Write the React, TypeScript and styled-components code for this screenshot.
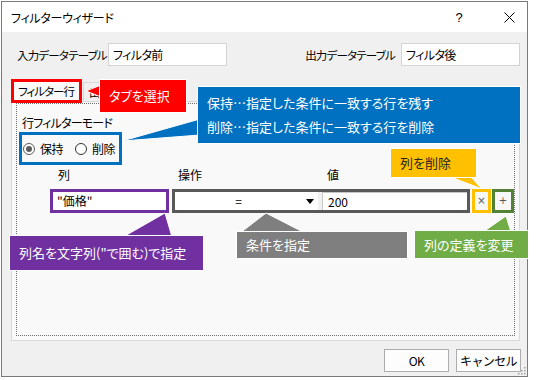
import styled, { createGlobalStyle } from "styled-components";

const GlobalStyle = createGlobalStyle`
  html, body {
    margin: 0;
    padding: 0;
    background: #ffffff;
  }
  body {
    font-family: "Noto Sans CJK JP", "Noto Sans", sans-serif;
    font-feature-settings: "palt" 1;
    color: #000;
  }
`;

type CalloutSpec = {
  x: number;
  y: number;
  w: number;
  h: number;
  bg: string;
  color: string;
  tail: string;
  lines: string[];
};

// 吹き出し（ページ座標で指定）
const callouts: CalloutSpec[] = [
  { x: 100, y: 80, w: 86, h: 32, bg: "#ff0000", color: "#fff", tail: "101,85 86,91 101,97", lines: ["タブを選択"] },
  {
    x: 198, y: 87, w: 322, h: 56, bg: "#0070c0", color: "#fff", tail: "200,119 122,141 200,135",
    lines: ["保持…指定した条件に一致する行を残す", "削除…指定した条件に一致する行を削除"],
  },
  { x: 391, y: 149, w: 85, h: 28, bg: "#ffc000", color: "#262626", tail: "448,176 482,189 470,176", lines: ["列を削除"] },
  { x: 10, y: 236, w: 193, h: 34, bg: "#7030a0", color: "#fff", tail: "123,237 165,213 172,237", lines: ['列名を文字列("で囲む)で指定'] },
  { x: 237, y: 232, w: 170, h: 26, bg: "#7f7f7f", color: "#fff", tail: "240,233 266,213 305,233", lines: ["条件を指定"] },
  { x: 415, y: 231, w: 113, h: 27, bg: "#70ad47", color: "#fff", tail: "483,232 506,216 511,232", lines: ["列の定義を変更"] },
];

function App() {
  return (
    <>
      <GlobalStyle />
      <Window>
        <TitleBar>
          <TitleText>フィルターウィザード</TitleText>
          <HelpButton>?</HelpButton>
          <CloseButton>
            <svg width="11" height="11" viewBox="0 0 11 11">
              <path d="M0.5 0.5 L10.5 10.5 M10.5 0.5 L0.5 10.5" stroke="#000" strokeWidth="1" />
            </svg>
          </CloseButton>
        </TitleBar>
        <Body>
          <TableRow>
            <Field>
              <FieldLabel $width={85}>入力データテーブル</FieldLabel>
              <TextBox>フィルタ前</TextBox>
            </Field>
            <Field>
              <FieldLabel>出力データテーブル</FieldLabel>
              <TextBox>フィルタ後</TextBox>
            </Field>
          </TableRow>

          <TabStrip>
            <TabMark>
              <Tab $active>フィルター行</Tab>
            </TabMark>
            <Tab>出力列</Tab>
          </TabStrip>

          <TabPanel>
            <FocusRect>
              <ModeLabel>行フィルターモード</ModeLabel>
              <RadioBox>
                <Radio>
                  <RadioCircle $checked />
                  保持
                </Radio>
                <Radio>
                  <RadioCircle />
                  削除
                </Radio>
              </RadioBox>

              <ColumnHeaders>
                <HeaderCell $width={122} $indent={8}>列</HeaderCell>
                <HeaderCell $width={150} $indent={6}>操作</HeaderCell>
                <HeaderCell $indent={5}>値</HeaderCell>
              </ColumnHeaders>

              <ConditionRow>
                <Mark $color="#7030a0" $width={119}>
                  <CellInput>"価格"</CellInput>
                </Mark>
                <Mark $color="#595959" $width={298} $gap={3}>
                  <OpSelect>
                    <OpValue>=</OpValue>
                    <OpArrow>
                      <svg width="8" height="5" viewBox="0 0 8 5">
                        <path d="M0 0 H8 L4 5 Z" fill="#000" />
                      </svg>
                    </OpArrow>
                  </OpSelect>
                  <ValueInput>200</ValueInput>
                </Mark>
                <Mark $color="#ffc000" $width={19} $gap={2}>
                  <SmallButton>×</SmallButton>
                </Mark>
                <Mark $color="#538135" $width={22} $gap={1}>
                  <SmallButton>+</SmallButton>
                </Mark>
              </ConditionRow>
            </FocusRect>
          </TabPanel>

          <Footer>
            <DialogButton>OK</DialogButton>
            <DialogButton>キャンセル</DialogButton>
          </Footer>
        </Body>

        <TailLayer width="526" height="376">
          <g transform="translate(-2,-2)">
            {callouts.map((c) => (
              <polygon key={c.tail} points={c.tail} fill={c.bg} stroke="#fff" strokeWidth="1" />
            ))}
          </g>
        </TailLayer>
        {callouts.map((c) => (
          <Callout key={c.lines[0]} $x={c.x} $y={c.y} $w={c.w} $h={c.h} $bg={c.bg} $color={c.color}>
            {c.lines.map((l) => (
              <CalloutLine key={l}>{l}</CalloutLine>
            ))}
          </Callout>
        ))}

        <Grip width="9" height="9" viewBox="0 0 9 9">
          <rect x="7" y="1" width="1.5" height="1.5" fill="#a0a0a0" />
          <rect x="4" y="4" width="1.5" height="1.5" fill="#a0a0a0" />
          <rect x="7" y="4" width="1.5" height="1.5" fill="#a0a0a0" />
          <rect x="1" y="7" width="1.5" height="1.5" fill="#a0a0a0" />
          <rect x="4" y="7" width="1.5" height="1.5" fill="#a0a0a0" />
          <rect x="7" y="7" width="1.5" height="1.5" fill="#a0a0a0" />
        </Grip>
      </Window>
    </>
  );
}

const Window = styled.div`
  position: relative;
  margin: 1px 0 0 1px;
  width: 527px;
  height: 376px;
  box-sizing: border-box;
  border: 1px solid #7a7a7a;
  background: #f0f0f0;
  display: flex;
  flex-direction: column;
  font-size: 12px;
`;

const TitleBar = styled.div`
  height: 30px;
  background: #ffffff;
  display: flex;
  align-items: center;
`;

const TitleText = styled.span`
  flex: 1;
  padding-left: 9px;
  font-size: 12px;
  letter-spacing: -0.3px;
`;

const HelpButton = styled.span`
  width: 16px;
  text-align: center;
  font-family: "Liberation Sans", sans-serif;
  font-size: 13px;
  margin-right: 24px;
`;

const CloseButton = styled.span`
  width: 36px;
  height: 30px;
  display: flex;
  align-items: center;
  justify-content: center;
`;

const Body = styled.div`
  flex: 1;
  display: flex;
  flex-direction: column;
  padding: 11px 7px 3px 9px;
`;

const TableRow = styled.div`
  height: 23px;
  display: flex;
  justify-content: space-between;
  padding-left: 6px;
`;

const Field = styled.div`
  display: flex;
  align-items: center;
  gap: 6px;
`;

const FieldLabel = styled.span<{ $width?: number }>`
  width: ${(p) => (p.$width ? `${p.$width}px` : "auto")};
  white-space: nowrap;
  font-size: 11.5px;
  letter-spacing: -0.8px;
`;

const TextBox = styled.div`
  width: 119px;
  height: 23px;
  box-sizing: border-box;
  border: 1px solid #d4d4d4;
  background: #ffffff;
  padding-left: 4px;
  line-height: 21px;
  letter-spacing: -0.6px;
`;

const TabStrip = styled.div`
  margin-top: 13px;
  display: flex;
  align-items: flex-end;
  height: 22px;
  position: relative;
  z-index: 1;
`;

const TabMark = styled.div`
  border: 3px solid #ff0000;
  margin-bottom: -2px;
  margin-right: 1px;
  display: flex;
`;

const Tab = styled.div<{ $active?: boolean }>`
  height: ${(p) => (p.$active ? 18 : 19)}px;
  width: ${(p) => (p.$active ? "65px" : "48px")};
  padding-left: ${(p) => (p.$active ? 4 : 5)}px;
  box-sizing: border-box;
  white-space: nowrap;
  background: ${(p) => (p.$active ? "#f9f9f9" : "#f0f0f0")};
  border: ${(p) => (p.$active ? "none" : "1px solid #d9d9d9")};
  border-bottom: none;
  font-size: 11.5px;
  line-height: 18px;
  letter-spacing: -1px;
`;

const TabPanel = styled.div`
  height: 240px;
  box-sizing: border-box;
  border: 1px solid #d9d9d9;
  background: #f9f9f9;
  padding: 1px 4px 4px 4px;
  display: flex;
`;

const FocusRect = styled.div`
  flex: 1;
  border: 1px dotted #6e6e6e;
  display: flex;
  flex-direction: column;
`;

const ModeLabel = styled.div`
  margin: 11px 0 0 5px;
  line-height: 16px;
  letter-spacing: -0.8px;
`;

const RadioBox = styled.div`
  margin: 1px 0 0 2px;
  width: 103px;
  height: 33px;
  box-sizing: border-box;
  border: 3px solid #0070c0;
  display: flex;
  align-items: center;
  padding-left: 1px;
`;

const Radio = styled.label`
  display: flex;
  align-items: center;
  flex-shrink: 0;
  white-space: nowrap;
  gap: 5px;
  margin-right: 12px;
  letter-spacing: -0.5px;
`;

const RadioCircle = styled.span<{ $checked?: boolean }>`
  width: 12px;
  height: 12px;
  flex-shrink: 0;
  box-sizing: border-box;
  border-radius: 50%;
  border: 1px solid ${(p) => (p.$checked ? "#5c5c5c" : "#333")};
  background: #ffffff;
  display: flex;
  align-items: center;
  justify-content: center;

  &::after {
    content: "";
    width: 6px;
    height: 6px;
    border-radius: 50%;
    background: ${(p) => (p.$checked ? "#5c5c5c" : "transparent")};
  }
`;

const ColumnHeaders = styled.div`
  margin-top: 2px;
  padding-left: 33px;
  display: flex;
  line-height: 16px;
`;

const HeaderCell = styled.span<{ $width?: number; $indent: number }>`
  width: ${(p) => (p.$width ? `${p.$width}px` : "auto")};
  padding-left: ${(p) => p.$indent}px;
  box-sizing: border-box;
`;

const ConditionRow = styled.div`
  margin-top: 6px;
  padding-left: 33px;
  display: flex;
  align-items: center;
`;

const Mark = styled.div<{ $color: string; $width: number; $gap?: number }>`
  width: ${(p) => p.$width}px;
  height: 24px;
  box-sizing: border-box;
  border: 3px solid ${(p) => p.$color};
  margin-left: ${(p) => p.$gap ?? 0}px;
  display: flex;
  background: #f0f0f0;
`;

const CellInput = styled.div`
  flex: 1;
  background: #ffffff;
  padding-left: 4px;
  line-height: 18px;
`;

const OpSelect = styled.div`
  width: 143px;
  display: flex;
  background: #ffffff;
`;

const OpValue = styled.span`
  flex: 1;
  text-align: center;
  line-height: 18px;
`;

const OpArrow = styled.span`
  width: 16px;
  display: flex;
  align-items: center;
  justify-content: center;
`;

const ValueInput = styled.div`
  flex: 1;
  margin-left: 4px;
  background: #ffffff;
  border-left: 1px solid #c8c8c8;
  border-top: 1px solid #c8c8c8;
  padding-left: 5px;
  line-height: 17px;
`;

const SmallButton = styled.div`
  flex: 1;
  background: #f7f7f7;
  color: #555;
  font-family: "DejaVu Sans", sans-serif;
  font-size: 10px;
  line-height: 18px;
  text-align: center;
`;

const Footer = styled.div`
  margin-top: 8px;
  margin-right: -1px;
  display: flex;
  justify-content: flex-end;
  gap: 7px;
`;

const DialogButton = styled.button`
  width: 65px;
  height: 23px;
  border: 1px solid #adadad;
  background: #fdfdfd;
  font-family: inherit;
  font-size: 12px;
  letter-spacing: -0.6px;
  padding: 0;
  color: #000;
`;

const TailLayer = styled.svg`
  position: absolute;
  left: 0;
  top: 0;
  z-index: 2;
  overflow: visible;
  pointer-events: none;
`;

const Callout = styled.div<{ $x: number; $y: number; $w: number; $h: number; $bg: string; $color: string }>`
  position: absolute;
  z-index: 3;
  left: ${(p) => p.$x - 2}px;
  top: ${(p) => p.$y - 2}px;
  width: ${(p) => p.$w}px;
  height: ${(p) => p.$h}px;
  box-sizing: border-box;
  background: ${(p) => p.$bg};
  color: ${(p) => p.$color};
  outline: 1px solid #ffffff;
  padding-left: 9px;
  display: flex;
  flex-direction: column;
  justify-content: center;
  font-size: 13px;
`;

const CalloutLine = styled.span`
  line-height: 24px;
  white-space: nowrap;
`;

const Grip = styled.svg`
  position: absolute;
  right: 1px;
  bottom: 1px;
`;

export default App;
